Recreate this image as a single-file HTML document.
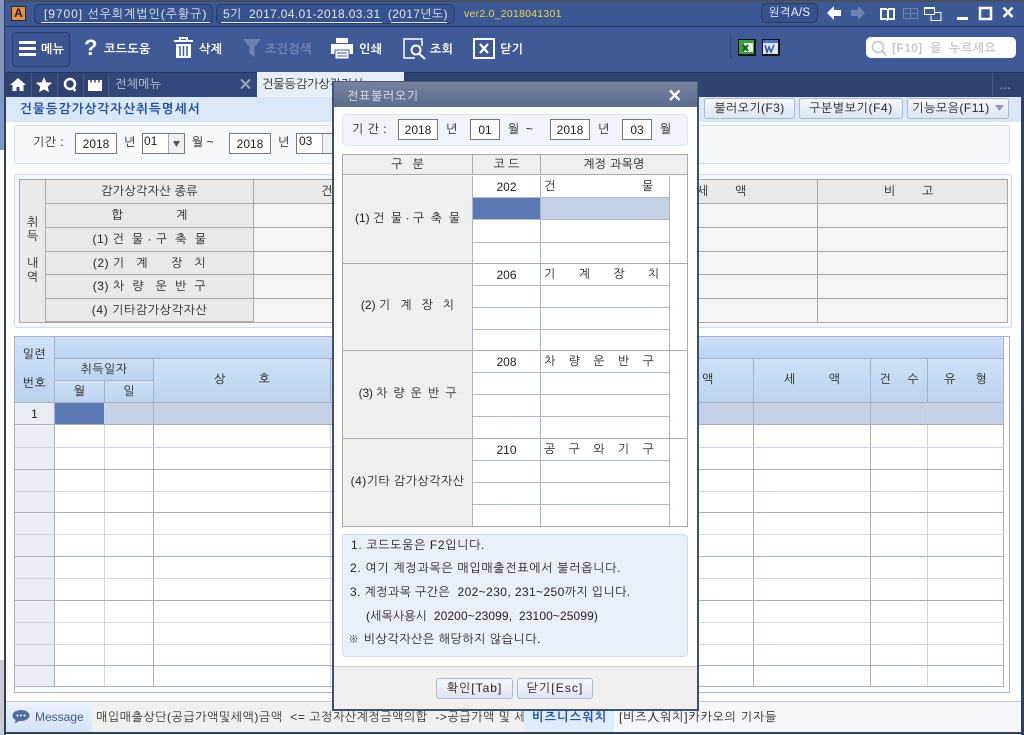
<!DOCTYPE html>
<html lang="ko"><head><meta charset="utf-8"><title>건물등감가상각자산취득명세서</title>
<style>
html,body{margin:0;padding:0;width:1024px;height:735px;overflow:hidden;background:#fff}
body{position:relative;font-family:"Liberation Sans","NanumGothic","Noto Sans CJK KR",sans-serif;font-size:12px;color:#222}
div,span,svg{position:absolute;box-sizing:border-box}
.t{white-space:pre;line-height:16px;height:16px}
.c{text-align:center;white-space:pre}
.w{color:#fff;font-weight:bold;letter-spacing:.4px}
.hl{background:#a8b0bc}
.inp{background:#fff;border:1px solid #777;text-align:center;line-height:20px;height:21px;color:#222}
.btn{border:1px solid #a9bad3;border-radius:3px;background:linear-gradient(#f6f8fc,#dde5f2);text-align:center;line-height:19px;height:21px;color:#222;white-space:pre;letter-spacing:.4px}
.g{background:#e9e9e9;border-right:1px solid #a8a8a8;border-bottom:1px solid #a8a8a8;text-align:center;white-space:pre;color:#222}
.b{background:linear-gradient(#cfe0f7,#bdd2ee);border-right:1px solid #a5b1c8;border-bottom:1px solid #a5b1c8;text-align:center;white-space:pre;color:#222}
</style></head><body>

<!-- outer left edge -->
<div style="left:0;top:0;width:5px;height:150px;background:#8298c0"></div>
<div style="left:0;top:660px;width:5px;height:75px;background:#c9ccd2"></div>
<div style="left:4px;top:0;width:2px;height:735px;background:#2e3f63"></div>
<div style="left:1021px;top:97px;width:3px;height:638px;background:#2e3f63"></div>

<!-- title bar -->
<div style="left:5px;top:0;width:1019px;height:27px;background:#3c5895;border-bottom:1px solid #253a68;border-top:2px solid #4a4f5c"></div>
<div style="left:11px;top:6px;width:15px;height:15px;background:#e88f44;border:1px solid #2a2a2a;color:#222;font:bold 12px/13px 'Liberation Sans';text-align:center">A</div>
<div style="left:34px;top:4px;width:179px;height:20px;border:1px solid #283c69;border-radius:5px;background:#37518c"></div>
<div style="left:216px;top:4px;width:239px;height:20px;border:1px solid #283c69;border-radius:5px;background:#37518c"></div>
<div style="left:41px;top:22px;width:169px;height:1px;background:#dfe6f3"></div>
<div style="left:221px;top:22px;width:161px;height:1px;background:#dfe6f3"></div>
<div style="left:391px;top:22px;width:56px;height:1px;background:#dfe6f3"></div>
<div class="t" style="left:44px;top:6px;color:#e4e9f3;letter-spacing:.95px">[9700] 선우회계법인(주황규)</div>
<div class="t" style="left:223px;top:6px;color:#e4e9f3;letter-spacing:.35px">5기  2017.04.01-2018.03.31  (2017년도)</div>
<div class="t" style="left:464px;top:6px;color:#e9d84a;font-size:10.5px;letter-spacing:.25px">ver2.0_2018041301</div>
<div class="c" style="left:761px;top:3px;width:57px;height:20px;border:1px solid #283c69;border-radius:5px;background:#37518c;color:#eef;line-height:18px;font-size:11.5px;letter-spacing:.3px">원격A/S</div>
<svg style="left:826px;top:5px" width="195" height="18" viewBox="0 0 195 18">
<path d="M1 8 L8 1 V5 H15 V11 H8 V15Z" fill="#fff"/>
<path d="M39 8 L32 1 V5 H25 V11 H32 V15Z" fill="#6d82ad"/>
<path d="M54 3h7v1h1v-1h7v12h-7v1h-1v-1h-7zM56 5v8h5V5zM63 5v8h4V5z" fill="#fff" fill-rule="evenodd"/>
<path d="M77.500 3.500h14v10h-14zM77.500 8.500h14M84.500 3.500v10" fill="none" stroke="#6d82ad"/>
<path d="M98.500 2.500h10v7h-10zM99 3.500h9" fill="none" stroke="#fff"/>
<path d="M109 7.500h6v8h-10v-5" fill="none" stroke="#fff"/>
<rect x="131" y="12" width="11" height="3" fill="#fff"/>
<path d="M154 3h11v11h-11z" fill="none" stroke="#fff" stroke-width="2.500"/>
<path d="M177.500 2.500l9 9.500M186.500 2.500l-9 9.500" stroke="#fff" stroke-width="2.500" fill="none"/>
</svg>

<!-- toolbar -->
<div style="left:5px;top:27px;width:1019px;height:45px;background:#405a97"></div>
<div style="left:12px;top:32px;width:58px;height:35px;border:1px solid #2b3f6f;border-radius:4px;background:#3c5590"></div>
<svg style="left:19px;top:41px" width="18" height="16"><path d="M0 0h17v3H0zM0 6h17v3H0zM0 12h17v3H0z" fill="#fff"/></svg>
<div class="t w" style="left:41px;top:41px">메뉴</div>
<div class="t w" style="left:84px;top:36px;font-size:22px;line-height:24px;height:24px">?</div>
<div class="t w" style="left:104px;top:41px">코드도움</div>
<svg style="left:174px;top:37px" width="19" height="22"><path d="M6 3V1h7v2M0 4h19" fill="none" stroke="#fff" stroke-width="2"/><path d="M2 7h15v14H2z" fill="#fff"/><path d="M6 9v10M9.500 9v10M13 9v10" stroke="#405a97" stroke-width="1.500"/></svg>
<div class="t w" style="left:199px;top:41px">삭제</div>
<svg style="left:243px;top:38px" width="19" height="20"><path d="M0 1h18l-6.500 8v10l-5-3V9z" fill="#6d82ad"/></svg>
<div class="t w" style="left:265px;top:41px;color:#7286b0">조건검색</div>
<svg style="left:331px;top:37px" width="22" height="23"><path d="M5 1h12v5H5z" fill="#fff"/><path d="M0 7h22v10H0z" fill="#fff"/><path d="M4 13h14v9H4z" fill="#fff" stroke="#405a97"/><path d="M6 16h10M6 19h10" stroke="#405a97"/></svg>
<div class="t w" style="left:359px;top:41px">인쇄</div>
<svg style="left:403px;top:38px" width="23" height="22"><path d="M14 1H1v19h11" fill="none" stroke="#fff" stroke-width="1.500"/><path d="M14 1h5v7" fill="none" stroke="#fff" stroke-width="1.500"/><circle cx="13" cy="12" r="4.500" fill="none" stroke="#fff" stroke-width="2"/><path d="M16 15.500l6 5.500" stroke="#fff" stroke-width="2"/></svg>
<div class="t w" style="left:430px;top:41px">조회</div>
<svg style="left:473px;top:38px" width="22" height="21"><path d="M1 1h20v19H1z" fill="none" stroke="#fff" stroke-width="2"/><path d="M7 6l8 9M15 6l-8 9" stroke="#fff" stroke-width="2.200"/></svg>
<div class="t w" style="left:500px;top:41px">닫기</div>
<div style="left:730px;top:37px;width:1px;height:21px;background:#2e4478"></div>
<svg style="left:738px;top:39px" width="18" height="17"><rect width="18" height="17" fill="#111"/><rect x="1" y="1" width="15" height="14" fill="#3f9e45"/><rect x="6" y="4" width="9" height="9" fill="#dcefdc"/><path d="M5 6l5 6M10 6l-5 6" stroke="#10601a" stroke-width="2"/></svg>
<svg style="left:762px;top:39px" width="18" height="17"><rect width="18" height="17" fill="#111"/><rect x="1" y="1" width="15" height="14" fill="#dfe7f5"/><rect x="1" y="1" width="15" height="3" fill="#4a73c0"/><path d="M3 6l2 7 2-5 2 5 3-7" stroke="#2a55a8" stroke-width="1.500" fill="none"/></svg>
<div style="left:866px;top:37px;width:150px;height:21px;border-radius:5px;background:#fff"></div>
<svg style="left:871px;top:40px" width="17" height="16"><circle cx="7" cy="7" r="5.500" fill="none" stroke="#c2cbd9" stroke-width="1.700"/><path d="M11 11l4.500 4.500" stroke="#c2cbd9" stroke-width="2"/></svg>
<div class="t" style="left:892px;top:40px;color:#c3c8d2;font-weight:bold;letter-spacing:.4px">[F10]  을  누르세요</div>

<!-- tab bar -->
<div style="left:6px;top:72px;width:1018px;height:25px;background:#2f4270;border-top:1px solid #263760"></div>
<div style="left:31px;top:73px;width:1px;height:24px;background:#4a5d88"></div>
<div style="left:57px;top:73px;width:1px;height:24px;background:#4a5d88"></div>
<div style="left:83px;top:73px;width:1px;height:24px;background:#4a5d88"></div>
<div style="left:108px;top:73px;width:1px;height:24px;background:#4a5d88"></div>
<div style="left:109px;top:73px;width:148px;height:24px;background:#33477a"></div>
<svg style="left:10px;top:77px" width="95" height="16"><path d="M8 1L0 8h2.500v6h4v-4h3v4h4V8H16z" fill="#fff"/><path d="M34 0l2.300 5.200 5.700.6-4.200 3.800 1.200 5.600L34 12.400l-5 2.800 1.200-5.600L26 5.800l5.700-.6z" fill="#fff"/><circle cx="60" cy="7" r="5" fill="none" stroke="#fff" stroke-width="2.500"/><path d="M62 10l3.500 4" stroke="#fff" stroke-width="2.500"/><path d="M78 3h14v11H78z" fill="#fff"/><path d="M81 2.500v3M85 2.500v3M89 2.500v3" stroke="#2f4270" stroke-width="1.500"/></svg>
<div class="t" style="left:115px;top:76px;color:#c4cbd9;letter-spacing:.3px">전체메뉴</div>
<svg style="left:240px;top:78px" width="12" height="13"><path d="M1 1.500l9 9M10 1.500l-9 9" stroke="#9aa6bd" stroke-width="2"/></svg>
<div style="left:257px;top:72px;width:147px;height:25px;background:#e8eef8"></div>
<div class="t" style="left:262px;top:76px;color:#222">건물등감가상각자산</div>
<div style="left:992px;top:73px;width:1px;height:24px;background:#4a5d88"></div>
<div class="t" style="left:1000px;top:79px;color:#8b9ab8;font-size:10px;letter-spacing:1px;font-weight:bold">...</div>

<!-- subtitle strip -->
<div style="left:6px;top:97px;width:1015px;height:25px;background:#d9e7f9"></div>
<div class="t" style="left:20px;top:101px;color:#1d4da0;font-weight:bold;font-size:12.500px;letter-spacing:1.15px">건물등감가상각자산취득명세서</div>
<div class="btn" style="left:704px;top:98px;width:91px">불러오기(F3)</div>
<div class="btn" style="left:799px;top:98px;width:104px;letter-spacing:.6px">구분별보기(F4)</div>
<div class="btn" style="left:907px;top:98px;width:102px;padding-right:14px;letter-spacing:.5px">기능모음(F11)</div>
<svg style="left:995px;top:105px" width="10" height="7"><path d="M0 0h9L4.500 6z" fill="#8e9bb4"/></svg>

<!-- period panel -->
<div style="left:14px;top:125px;width:996px;height:39px;background:#f5f8fd;border:1px solid #cfdcef;border-radius:3px"></div>
<div class="t" style="left:33px;top:134px;letter-spacing:.5px">기간 :</div>
<div class="inp" style="left:75px;top:133px;width:42px">2018</div>
<div class="t" style="left:124px;top:134px">년</div>
<div style="left:142px;top:133px;width:43px;height:21px;background:#fff;border:1px solid #777"></div>
<div class="t" style="left:144px;top:133px">01</div>
<div style="left:168px;top:134px;width:16px;height:19px;background:#eef0f3;border-left:1px solid #aaa"></div>
<svg style="left:173px;top:141px" width="7" height="6"><path d="M0 0h7L3.500 6z" fill="#555"/></svg>
<div class="t" style="left:192px;top:134px">월 ~</div>
<div class="inp" style="left:229px;top:133px;width:42px">2018</div>
<div class="t" style="left:278px;top:134px">년</div>
<div style="left:296px;top:133px;width:38px;height:21px;background:#fff;border:1px solid #777"></div>
<div class="t" style="left:299px;top:133px">03</div>
<div style="left:322px;top:134px;width:11px;height:19px;background:#eef0f3;border-left:1px solid #aaa"></div>

<!-- summary table -->
<div style="left:14px;top:174px;width:998px;height:154px;background:#f5f8fd;border:1px solid #cfdcef;border-radius:3px"></div>
<div style="left:19px;top:179px;width:989px;height:144px;background:#f5f5f5;border:1px solid #a8a8a8"></div>
<div style="left:20px;top:180px;width:26px;height:142px;background:#e9e9e9;border-right:1px solid #a8a8a8"></div>
<div class="c" style="left:20px;top:215px;width:25px;line-height:14px">취
득</div>
<div class="c" style="left:20px;top:256px;width:25px;line-height:14px">내
역</div>
<div class="g" style="left:46px;top:180px;width:208px;height:24px;line-height:22px;letter-spacing:.35px">감가상각자산 종류</div>
<div class="g" style="left:46px;top:204px;width:208px;height:24px;line-height:22px">합                계</div>
<div class="g" style="left:46px;top:228px;width:208px;height:24px;line-height:22px;letter-spacing:.5px">(1) 건  물 · 구  축  물</div>
<div class="g" style="left:46px;top:252px;width:208px;height:23px;line-height:22px;letter-spacing:.5px">(2) 기   계      장   치</div>
<div class="g" style="left:46px;top:275px;width:208px;height:24px;line-height:22px;letter-spacing:.5px">(3) 차  량   운  반  구</div>
<div class="g" style="left:46px;top:299px;width:208px;height:23px;line-height:22px;letter-spacing:.6px">(4) 기타감가상각자산</div>
<div style="left:254px;top:180px;width:753px;height:23px;background:#e9e9e9"></div>
<div style="left:254px;top:203px;width:753px;height:1px;background:#a8a8a8"></div>
<div style="left:254px;top:227px;width:753px;height:1px;background:#a8a8a8"></div>
<div style="left:254px;top:251px;width:753px;height:1px;background:#a8a8a8"></div>
<div style="left:254px;top:274px;width:753px;height:1px;background:#a8a8a8"></div>
<div style="left:254px;top:298px;width:753px;height:1px;background:#a8a8a8"></div>
<div style="left:817px;top:180px;width:1px;height:142px;background:#a8a8a8"></div>
<div class="t" style="left:321px;top:183px">건</div>
<div class="t" style="left:697px;top:183px">세        액</div>
<div class="t" style="left:884px;top:183px">비        고</div>

<!-- grid -->
<div style="left:14px;top:336px;width:996px;height:357px;background:#fff;border:1px solid #a9b3c9"></div>
<div class="b" style="left:15px;top:337px;width:40px;height:66px"></div>
<div class="c" style="left:15px;top:346px;width:39px;line-height:16px;letter-spacing:.5px">일련</div>
<div class="c" style="left:15px;top:375px;width:39px;line-height:16px;letter-spacing:.5px">번호</div>
<div class="b" style="left:55px;top:337px;width:949px;height:22px"></div>
<div class="b" style="left:55px;top:359px;width:99px;height:22px;line-height:21px;letter-spacing:.5px">취득일자</div>
<div class="b" style="left:55px;top:381px;width:50px;height:22px;line-height:21px">월</div>
<div class="b" style="left:105px;top:381px;width:49px;height:22px;line-height:21px">일</div>
<div class="b" style="left:154px;top:359px;width:177px;height:44px;line-height:41px">상          호</div>
<div class="b" style="left:331px;top:359px;width:423px;height:44px;line-height:41px;text-align:left;padding-left:371px">액</div>
<div class="b" style="left:754px;top:359px;width:117px;height:44px;line-height:41px">세          액</div>
<div class="b" style="left:871px;top:359px;width:57px;height:44px;line-height:41px">건     수</div>
<div class="b" style="left:928px;top:359px;width:76px;height:44px;line-height:41px">유      형</div>
<!-- left column -->
<div style="left:15px;top:403px;width:40px;height:284px;background:#e9edf4"></div>
<div class="c" style="left:15px;top:403px;width:39px;line-height:22px;color:#222">1</div>
<!-- selected row -->
<div style="left:55px;top:403px;width:949px;height:22px;background:#c4d0e6"></div>
<div style="left:55px;top:403px;width:49px;height:21px;background:#5b79b5"></div>
<!-- vertical lines -->
<div style="left:54px;top:403px;width:1px;height:284px;background:#a5b1c8"></div>
<div style="left:104px;top:403px;width:1px;height:284px;background:#ced4e0"></div>
<div style="left:153px;top:403px;width:1px;height:284px;background:#a5b1c8"></div>
<div style="left:330px;top:403px;width:1px;height:284px;background:#ced4e0"></div>
<div style="left:753px;top:403px;width:1px;height:284px;background:#a5b1c8"></div>
<div style="left:870px;top:403px;width:1px;height:284px;background:#a5b1c8"></div>
<div style="left:927px;top:403px;width:1px;height:284px;background:#ced4e0"></div>
<div style="left:1003px;top:337px;width:1px;height:350px;background:#a5b1c8"></div>
<!-- horizontal lines -->
<div class="hl" style="left:15px;top:402px;width:989px;height:1px"></div>
<div class="hl" style="left:15px;top:424px;width:989px;height:1px"></div>
<div class="hl" style="left:15px;top:447px;width:989px;height:1px;background:#ced4e0"></div>
<div class="hl" style="left:15px;top:469px;width:989px;height:1px"></div>
<div class="hl" style="left:15px;top:491px;width:989px;height:1px;background:#ced4e0"></div>
<div class="hl" style="left:15px;top:512px;width:989px;height:1px"></div>
<div class="hl" style="left:15px;top:534px;width:989px;height:1px;background:#ced4e0"></div>
<div class="hl" style="left:15px;top:556px;width:989px;height:1px"></div>
<div class="hl" style="left:15px;top:578px;width:989px;height:1px;background:#ced4e0"></div>
<div class="hl" style="left:15px;top:600px;width:989px;height:1px"></div>
<div class="hl" style="left:15px;top:622px;width:989px;height:1px;background:#ced4e0"></div>
<div class="hl" style="left:15px;top:644px;width:989px;height:1px;background:#ced4e0"></div>
<div class="hl" style="left:15px;top:665px;width:989px;height:1px"></div>
<div class="hl" style="left:15px;top:686px;width:989px;height:1px"></div>

<!-- bottom bar -->
<div style="left:6px;top:701px;width:1015px;height:1px;background:#c6c8cc"></div>
<div style="left:6px;top:702px;width:1015px;height:30px;background:#f5f7fb"></div>
<div style="left:92px;top:703px;width:432px;height:29px;background:#f0f0ee"></div>
<div style="left:6px;top:703px;width:86px;height:29px;background:linear-gradient(#eaf2fc,#d4e3f6)"></div>
<svg style="left:12px;top:710px" width="18" height="14"><path d="M9 0c5 0 8.500 2.500 8.500 5.500S14 11 9 11l-2 0-4 2.500 .5-3.500C1.500 9 .5 7.500 .5 5.500 .5 2.500 4 0 9 0z" fill="#4f709f"/><circle cx="5.500" cy="5.500" r="1" fill="#fff"/><circle cx="9" cy="5.500" r="1" fill="#fff"/><circle cx="12.500" cy="5.500" r="1" fill="#fff"/></svg>
<div class="t" style="left:35px;top:709px;color:#3d5c8c;font-size:12px">Message</div>
<div class="t" style="left:96px;top:709px;color:#333;letter-spacing:.55px;width:428px;overflow:hidden">매입매출상단(공급가액및세액)금액  &lt;= 고정자산계정금액의합  -&gt;공급가액 및 세</div>
<div style="left:524px;top:703px;width:90px;height:29px;background:#deebfb"></div>
<div class="t" style="left:532px;top:709px;color:#1d4da0;font-weight:bold;letter-spacing:1.3px">비즈니스워치</div>
<div class="t" style="left:619px;top:709px;color:#222;letter-spacing:.8px">[비즈人워치]카카오의 기자들</div>
<div style="left:4px;top:732px;width:1020px;height:2px;background:#2e3f63"></div>

<!-- dialog -->
<div style="left:332px;top:81px;width:367px;height:630px;background:#fff;border:2px solid #3d5077;border-top:1px solid #4a5a7c"></div>
<div style="left:334px;top:82px;width:363px;height:25px;background:linear-gradient(#76839f,#5d6c8d)"></div>
<div class="t" style="left:347px;top:88px;color:#e2e6ee;letter-spacing:.7px">전표불러오기</div>
<svg style="left:669px;top:89px" width="12" height="13"><path d="M1 1.500l9.500 9.500M10.500 1.500L1 11" stroke="#fff" stroke-width="2.300"/></svg>

<div style="left:342px;top:114px;width:346px;height:32px;background:#eff3fa;border:1px solid #dce5f2;border-radius:4px"></div>
<div class="t" style="left:352px;top:121px;letter-spacing:.5px">기 간 :</div>
<div class="inp" style="left:398px;top:119px;width:40px">2018</div>
<div class="t" style="left:446px;top:121px">년</div>
<div class="inp" style="left:470px;top:119px;width:30px">01</div>
<div class="t" style="left:508px;top:121px">월  ~</div>
<div class="inp" style="left:550px;top:119px;width:40px">2018</div>
<div class="t" style="left:598px;top:121px">년</div>
<div class="inp" style="left:622px;top:119px;width:30px">03</div>
<div class="t" style="left:660px;top:121px">월</div>

<div style="left:342px;top:154px;width:346px;height:373px;background:#fff;border:1px solid #a8a8a8"></div>
<div style="left:343px;top:155px;width:344px;height:20px;background:#efefed;border-bottom:1px solid #a8a8a8"></div>
<div class="c" style="left:343px;top:155px;width:129px;line-height:19px">구   분</div>
<div class="c" style="left:473px;top:155px;width:67px;line-height:19px">코 드</div>
<div class="c" style="left:541px;top:155px;width:146px;line-height:19px;letter-spacing:.3px">계정 과목명</div>
<div style="left:472px;top:155px;width:1px;height:20px;background:#a8a8a8"></div>
<div style="left:540px;top:155px;width:1px;height:20px;background:#a8a8a8"></div>
<!-- groups -->
<div style="left:343px;top:176px;width:129px;height:350px;background:#efefed"></div>
<div class="c" style="left:343px;top:210px;width:129px;line-height:16px">(1) 건  물 · 구  축  물</div>
<div class="c" style="left:343px;top:297px;width:129px;line-height:16px">(2) 기   계   장   치</div>
<div class="c" style="left:343px;top:385px;width:129px;line-height:16px;letter-spacing:-.2px">(3) 차  량  운  반  구</div>
<div class="c" style="left:343px;top:473px;width:129px;line-height:16px;letter-spacing:.45px">(4)기타 감가상각자산</div>
<div style="left:472px;top:197px;width:68px;height:22px;background:#5b79b5"></div>
<div style="left:541px;top:197px;width:128px;height:22px;background:#c4d0e6"></div>
<div style="left:343px;top:263px;width:344px;height:1px;background:#a8a8a8"></div>
<div style="left:343px;top:350px;width:344px;height:1px;background:#a8a8a8"></div>
<div style="left:343px;top:438px;width:344px;height:1px;background:#a8a8a8"></div>
<div style="left:472px;top:176px;width:1px;height:350px;background:#a9b3c9"></div>
<div style="left:540px;top:176px;width:1px;height:350px;background:#a9b3c9"></div>
<div style="left:669px;top:176px;width:1px;height:350px;background:#a9b3c9"></div>
<div style="left:473px;top:197px;width:196px;height:1px;background:#b0b8ca"></div>
<div style="left:473px;top:219px;width:196px;height:1px;background:#b0b8ca"></div>
<div style="left:473px;top:242px;width:196px;height:1px;background:#b0b8ca"></div>
<div style="left:473px;top:285px;width:196px;height:1px;background:#b0b8ca"></div>
<div style="left:473px;top:307px;width:196px;height:1px;background:#b0b8ca"></div>
<div style="left:473px;top:329px;width:196px;height:1px;background:#b0b8ca"></div>
<div style="left:473px;top:372px;width:196px;height:1px;background:#b0b8ca"></div>
<div style="left:473px;top:394px;width:196px;height:1px;background:#b0b8ca"></div>
<div style="left:473px;top:416px;width:196px;height:1px;background:#b0b8ca"></div>
<div style="left:473px;top:460px;width:196px;height:1px;background:#b0b8ca"></div>
<div style="left:473px;top:482px;width:196px;height:1px;background:#b0b8ca"></div>
<div style="left:473px;top:504px;width:196px;height:1px;background:#b0b8ca"></div>
<div class="c" style="left:473px;top:178px;width:67px;line-height:18px">202</div>
<div class="t" style="left:544px;top:178px">건                          물</div>
<div class="c" style="left:473px;top:266px;width:67px;line-height:18px">206</div>
<div class="t" style="left:544px;top:266px">기       계       장       치</div>
<div class="c" style="left:473px;top:353px;width:67px;line-height:18px">208</div>
<div class="t" style="left:544px;top:353px">차    량    운    반    구</div>
<div class="c" style="left:473px;top:441px;width:67px;line-height:18px">210</div>
<div class="t" style="left:544px;top:441px">공    구    와    기    구</div>

<div style="left:342px;top:534px;width:346px;height:123px;background:#eaf0f9;border:1px solid #cfdcef;border-radius:4px"></div>
<div class="t" style="left:351px;top:537px;letter-spacing:.65px">1. 코드도움은 F2입니다.</div>
<div class="t" style="left:350px;top:560px;letter-spacing:.7px">2. 여기 계정과목은 매입매출전표에서 불러옵니다.</div>
<div class="t" style="left:350px;top:584px;letter-spacing:.4px">3. 계정과목 구간은  202~230, 231~250까지 입니다.</div>
<div class="t" style="left:366px;top:608px;letter-spacing:.1px">(세목사용시  20200~23099,  23100~25099)</div>
<div class="t" style="left:348px;top:631px;letter-spacing:.55px">※ 비상각자산은 해당하지 않습니다.</div>

<div style="left:334px;top:666px;width:363px;height:43px;background:#f0f0ee;border-top:1px solid #c9cbd0"></div>
<div class="btn" style="left:436px;top:678px;width:77px;letter-spacing:1px">확인[Tab]</div>
<div class="btn" style="left:517px;top:678px;width:76px;letter-spacing:1.1px">닫기[Esc]</div>

</body></html>
